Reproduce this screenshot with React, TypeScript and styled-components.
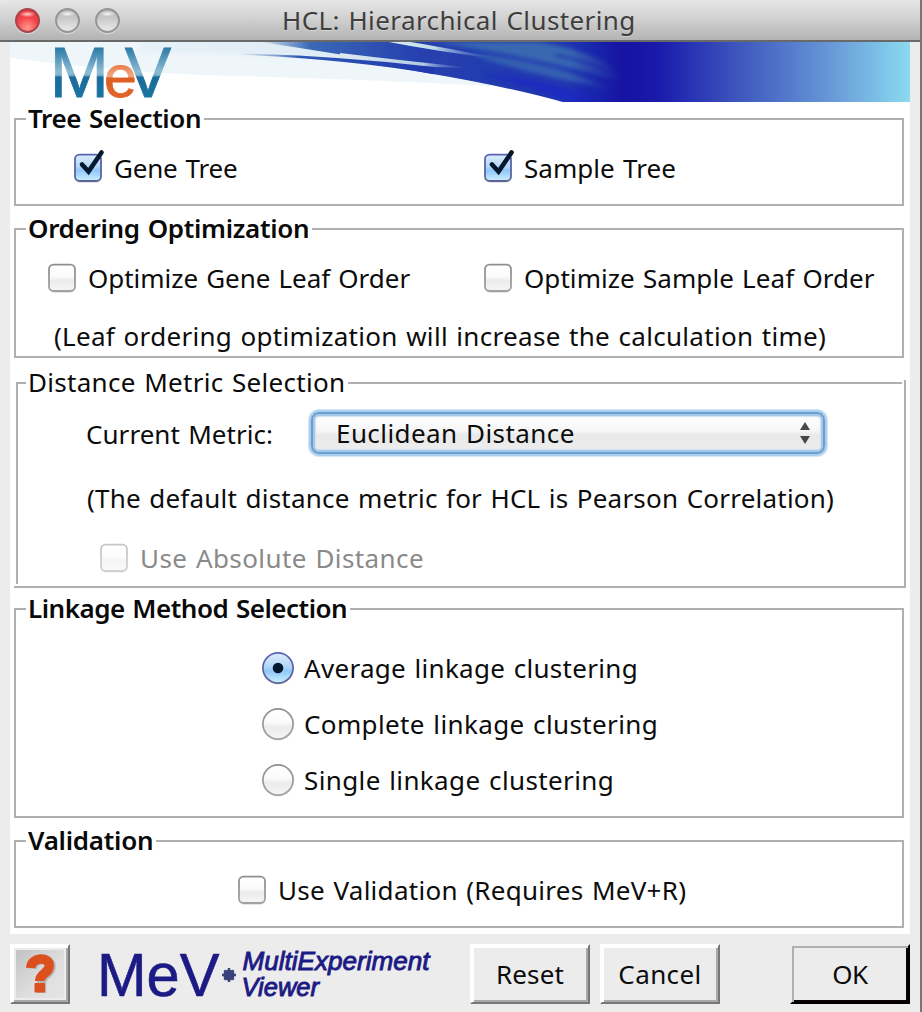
import React, { ReactNode } from 'react';
import styled, { createGlobalStyle, css } from 'styled-components';

const GlobalStyle = createGlobalStyle`
  html, body { margin: 0; padding: 0; background: #ececec; }
  * { box-sizing: border-box; }
`;

const uiFont = css`
  font-family: 'Noto Sans', 'Open Sans', sans-serif;
  font-size: 26px;
  line-height: 36px;
  word-spacing: 1.4px;
  white-space: nowrap;
`;

const Window = styled.div`
  display: flex;
  flex-direction: column;
  width: 922px;
  height: 1012px;
  background: #ececec;
  border-right: 2px solid #777;
  overflow: hidden;
`;

const TitleBar = styled.header`
  display: flex;
  align-items: center;
  height: 42px;
  flex: none;
  padding: 0 0 0 15px;
  margin-right: -2px;
  background: linear-gradient(#e7e7e7, #cfcfcf 50%, #b3b3b3);
  border-bottom: 2px solid #696969;
  border-radius: 4px 4px 0 0;
`;

const Lights = styled.div`
  display: flex;
  gap: 15px;
`;

const Light = styled.span<{ $red?: boolean }>`
  width: 25px;
  height: 25px;
  border-radius: 50%;
  border: 2px solid ${(p) => (p.$red ? '#a8444a' : '#959595')};
  background: ${(p) =>
    p.$red
      ? 'radial-gradient(ellipse 8px 3px at 50% 20%, #ffd3d3, rgba(255,200,200,0) 100%), radial-gradient(circle at 50% 85%, #ff9a90 0, #f5454a 50%, #dc3239 100%)'
      : 'radial-gradient(ellipse 8px 3px at 50% 18%, #f6f6f6, rgba(240,240,240,0) 100%), linear-gradient(#b5b5b5, #cecece 50%, #e9e9e9)'};
  box-shadow: 0 1px 1px rgba(255, 255, 255, 0.5);
`;

const Title = styled.h1`
  ${uiFont}
  margin: 0 0 0 162px;
  font-weight: 400;
  color: #3e3e3e;
  letter-spacing: 0.4px;
  text-shadow: 0 1px 0 rgba(255, 255, 255, 0.35);
`;

const Panel = styled.main`
  display: flex;
  flex-direction: column;
  width: 900px;
  height: 892px;
  flex: none;
  margin-left: 10px;
  background: #fff;
`;

const Banner = styled.svg`
  display: block;
  width: 900px;
  height: 60px;
  flex: none;
`;

const Group = styled.section<{ $top: number; $h: number }>`
  display: flex;
  flex-direction: column;
  width: 890px;
  height: ${(p) => p.$h}px;
  flex: none;
  margin: ${(p) => p.$top}px 0 0 4px;
  border: 2px solid #b0b0b0;
`;

/* The distance group is drawn with slightly offset edges. */
const OpenGroup = styled.section`
  display: grid;
  grid-template: 2px 2px 200px 2px 2px / 2px 2px 884px 2px 2px;
  width: 892px;
  height: 208px;
  flex: none;
  margin: 22px 0 0 4px;
`;

const Edge = styled.i<{ $area: string }>`
  grid-area: ${(p) => p.$area};
  background: #b0b0b0;
`;

const OpenBody = styled.div`
  grid-area: 3 / 3 / 4 / 4;
  display: flex;
  flex-direction: column;
  margin-left: -2px;
`;

const Legend = styled.h2<{ $ls: number; $plain?: boolean }>`
  ${uiFont}
  align-self: flex-start;
  height: 36px;
  margin: -20px 0 -16px 10px;
  padding: 0 3px 0 2px;
  background: #fff;
  color: #0a0a0a;
  font-weight: ${(p) => (p.$plain ? 400 : 600)};
  letter-spacing: ${(p) => p.$ls}px;
`;

const Line = styled.div<{ $top: number; $left: number }>`
  display: flex;
  align-items: center;
  height: 36px;
  flex: none;
  margin-top: ${(p) => p.$top}px;
  padding-left: ${(p) => p.$left}px;
`;

const Cell = styled.div<{ $w: number; $drop?: number }>`
  width: ${(p) => p.$w}px;
  flex: none;
  padding-top: ${(p) => p.$drop ?? 0}px;
`;

const Text = styled.span<{ $ls: number }>`
  ${uiFont}
  color: #0c0c0c;
  letter-spacing: ${(p) => p.$ls}px;
`;

const Option = styled.label<{ $gap: number; $dim?: boolean }>`
  display: flex;
  align-items: center;
  gap: ${(p) => p.$gap}px;
  ${(p) => p.$dim && css`${Text} { color: #8a8a8a; }`}
`;

const BoxSvg = styled.svg`
  display: block;
  width: 28px;
  height: 30px;
  flex: none;
  overflow: visible;
`;

const RadioSvg = styled.svg`
  display: block;
  width: 32px;
  height: 32px;
  flex: none;
  overflow: visible;
`;

const Select = styled.div`
  display: flex;
  align-items: center;
  justify-content: space-between;
  width: 514px;
  height: 42px;
  margin-bottom: 1px;
  padding: 0 13px 0 23px;
  border: 2px solid #6c9dcf;
  border-radius: 8px;
  background: linear-gradient(#fff, #f6f6f6 45%, #e9e9e9 55%, #ededed);
  box-shadow: 0 0 0 2px #a9cdec, 0 0 1px 3px #d3e6f6, inset 0 0 0 2px #a5c8e8, inset 0 0 1px 3px #cfe2f4;
`;

const Footer = styled.footer`
  display: flex;
  align-items: flex-start;
  height: 78px;
  padding: 10px 0 0 10px;
`;

const HelpButton = styled.button`
  width: 60px;
  height: 60px;
  padding: 0;
  border: 2px solid;
  border-color: #fff #777 #777 #fff;
  box-shadow: inset 2px 2px 0 #fff, inset -2px -2px 0 #a9a9a9, inset 4px 4px 0 #ececec, inset -4px -4px 0 #ececec;
  background: linear-gradient(135deg, #bdbdbd, #dedede 55%, #e6e6e6);
`;

const HelpIcon = styled.svg`
  display: block;
  width: 56px;
  height: 56px;
`;

const Push = styled.button<{ $ls: number; $default?: boolean; $ml: number }>`
  ${uiFont}
  width: 120px;
  height: 60px;
  padding: 0;
  margin-left: ${(p) => p.$ml}px;
  color: #0c0c0c;
  letter-spacing: ${(p) => p.$ls}px;
  background: #ececec;
  border: 2px solid;
  ${(p) =>
    p.$default
      ? css`
          border-color: #ececec #000 #000 #ececec;
          box-shadow: inset 2px 2px 0 #b0b0b0, inset -2px -2px 0 #0b0204;
        `
      : css`
          border-color: #fff #777 #777 #fff;
          box-shadow: inset 2px 2px 0 #fff, inset -2px -2px 0 #a9a9a9;
        `}
`;

const Brand = styled.svg`
  display: block;
  width: 340px;
  height: 60px;
  margin-left: 24px;
  margin-right: 36px;
`;

function Defs() {
  return (
    <defs>
      <linearGradient id="boxOff" x1="0" y1="0" x2="0" y2="1">
        <stop offset="0" stopColor="#fff" />
        <stop offset=".45" stopColor="#fbfbfb" />
        <stop offset=".6" stopColor="#ebebeb" />
        <stop offset="1" stopColor="#f6f6f6" />
      </linearGradient>
      <linearGradient id="boxOn" x1="0" y1="0" x2="0" y2="1">
        <stop offset="0" stopColor="#dcecfb" />
        <stop offset=".45" stopColor="#b4d7f8" />
        <stop offset=".6" stopColor="#8fc8f8" />
        <stop offset="1" stopColor="#cdf0ff" />
      </linearGradient>
      <linearGradient id="rimOn" x1="0" y1="0" x2="0" y2="1">
        <stop offset="0" stopColor="#5a62b4" />
        <stop offset="1" stopColor="#5d6496" />
      </linearGradient>
      <linearGradient id="rimOff" x1="0" y1="0" x2="0" y2="1">
        <stop offset="0" stopColor="#8f8f8f" />
        <stop offset="1" stopColor="#a2a2a2" />
      </linearGradient>
    </defs>
  );
}

function Check({ on, dim }: { on?: boolean; dim?: boolean }) {
  return (
    <BoxSvg viewBox="0 0 28 30" opacity={dim ? 0.5 : 1}>
      <Defs />
      <rect x="1" y="3" width="26" height="27" rx="5" fill="#000" opacity=".1" />
      <rect x="1" y="1.6" width="26" height="26.4" rx="4.5" fill={`url(#box${on ? 'On' : 'Off'})`} stroke={`url(#rim${on ? 'On' : 'Off'})`} strokeWidth="1.8" />
      {on && <path d="M8 11.5L14.5 18.5L27.5 -.5" fill="none" stroke="#04182e" strokeWidth="4.6" strokeLinecap="round" />}
    </BoxSvg>
  );
}

function Radio({ on }: { on?: boolean }) {
  return (
    <RadioSvg viewBox="0 0 32 32">
      <Defs />
      <circle cx="16" cy="17.2" r="15.3" fill="#000" opacity=".12" />
      <circle cx="16" cy="16" r="15.1" fill={`url(#box${on ? 'On' : 'Off'})`} stroke={`url(#rim${on ? 'On' : 'Off'})`} strokeWidth="1.7" />
      {on && <circle cx="16" cy="16" r="5.3" fill="#04182e" />}
    </RadioSvg>
  );
}

function CheckOption({ on, dim, ls, children }: { on?: boolean; dim?: boolean; ls: number; children: ReactNode }) {
  return (
    <Option $gap={12} $dim={dim}>
      <Check on={on} dim={dim} />
      <Text $ls={ls}>{children}</Text>
    </Option>
  );
}

function MevBanner() {
  return (
    <Banner viewBox="0 0 900 60">
      <defs>
        <linearGradient id="haze" gradientUnits="userSpaceOnUse" x1="130" y1="0" x2="420" y2="0">
          <stop offset="0" stopColor="#e6f1f8" />
          <stop offset="1" stopColor="#dbe8f1" />
        </linearGradient>
        <linearGradient id="sky" gradientUnits="userSpaceOnUse" x1="560" y1="0" x2="900" y2="0">
          <stop offset="0" stopColor="#1716a5" stopOpacity="0" />
          <stop offset=".16" stopColor="#1613a2" />
          <stop offset=".26" stopColor="#1a1aac" />
          <stop offset=".5" stopColor="#3e58be" />
          <stop offset=".75" stopColor="#6594d6" />
          <stop offset="1" stopColor="#8adaf0" />
        </linearGradient>
        <linearGradient id="upper" gradientUnits="userSpaceOnUse" x1="245" y1="0" x2="640" y2="0">
          <stop offset="0" stopColor="#4a7cc0" stopOpacity="0" />
          <stop offset=".14" stopColor="#3a69b6" />
          <stop offset=".4" stopColor="#2742ae" />
          <stop offset="1" stopColor="#1c2cb2" />
        </linearGradient>
        <linearGradient id="thin" gradientUnits="userSpaceOnUse" x1="232" y1="0" x2="420" y2="0">
          <stop offset="0" stopColor="#5f8cc8" stopOpacity=".1" />
          <stop offset=".3" stopColor="#2f59b2" />
          <stop offset="1" stopColor="#2238b0" />
        </linearGradient>
        <linearGradient id="ray" gradientUnits="userSpaceOnUse" x1="370" y1="0" x2="490" y2="0">
          <stop offset="0" stopColor="#e4f2f6" />
          <stop offset=".45" stopColor="#c0dbe8" />
          <stop offset="1" stopColor="#3f6db8" stopOpacity="0" />
        </linearGradient>
        <linearGradient id="gap" gradientUnits="userSpaceOnUse" x1="340" y1="0" x2="462" y2="0">
          <stop offset="0" stopColor="#dbe8f1" />
          <stop offset=".6" stopColor="#b3cbe3" />
          <stop offset="1" stopColor="#2b4ab0" stopOpacity="0" />
        </linearGradient>
        <linearGradient id="letterM" gradientUnits="userSpaceOnUse" x1="0" y1="4" x2="0" y2="56">
          <stop offset="0" stopColor="#2575a3" />
          <stop offset=".5" stopColor="#8dbcd4" />
          <stop offset=".56" stopColor="#7fb2cd" />
          <stop offset=".6" stopColor="#1a6b9b" />
          <stop offset="1" stopColor="#1b74a3" />
        </linearGradient>
        <linearGradient id="letterE" gradientUnits="userSpaceOnUse" x1="0" y1="22" x2="0" y2="56">
          <stop offset="0" stopColor="#e87a45" />
          <stop offset=".36" stopColor="#f1a983" />
          <stop offset=".42" stopColor="#dd5f22" />
          <stop offset="1" stopColor="#e0642a" />
        </linearGradient>
        <filter id="soft" x="-5%" y="-50%" width="110%" height="200%">
          <feGaussianBlur stdDeviation="2" />
        </filter>
        <filter id="fine" x="-5%" y="-50%" width="110%" height="200%">
          <feGaussianBlur stdDeviation=".6" />
        </filter>
      </defs>
      <rect width="900" height="60" fill="#fff" />
      <path d="M-5 -5H500V45Q380 38 190 33Q80 27 -5 15Z" fill="#eff6fa" filter="url(#fine)" />
      <path d="M130 -8H420V26Q300 12 130 11Z" fill="url(#haze)" filter="url(#soft)" />
      <g filter="url(#fine)">
        <path d="M245 -3H660V62H560Q500 45 420 31.500L340 17V14Q290 6 245 -1Z" fill="url(#upper)" />
        <path d="M330 11Q400 19.500 465 26Q420 26 330 18Z" fill="url(#gap)" />
        <path d="M232 11.500Q330 14 424 25V32.200Q340 17.500 232 12.800Z" fill="url(#thin)" />
        <path d="M368 -2H388Q440 6 495 18Q430 10 368 -2Z" fill="url(#ray)" />
      </g>
      <g filter="url(#soft)">
        <path d="M425 0H530Q600 12 620 42Q540 18 425 0Z" fill="#3767b0" />
        <path d="M460 12Q540 18 600 46Q520 34 460 12Z" fill="#386bb2" opacity=".8" />
        <path d="M470 31Q540 38 600 60H560Q520 45 470 31Z" fill="#1f2cc0" />
        <path d="M545 13Q590 22 625 42" fill="none" stroke="#2238ae" strokeWidth="3" />
        <path d="M590 -2Q625 6 645 34L690 -4Z" fill="#1715a0" />
      </g>
      <rect x="560" width="340" height="60" fill="url(#sky)" />
      <g fontFamily="'Liberation Sans', Arial, sans-serif" fontSize="71" strokeWidth=".8">
        <text x="39.500" y="54.700" textLength="59.500" lengthAdjust="spacingAndGlyphs" fill="url(#letterM)" stroke="url(#letterM)">M</text>
        <text x="114.700" y="54.700" textLength="46.500" lengthAdjust="spacingAndGlyphs" fill="url(#letterM)" stroke="url(#letterM)">V</text>
        <text x="94" y="54.700" fontSize="59" fill="url(#letterE)" stroke="url(#letterE)">e</text>
      </g>
    </Banner>
  );
}

export default function App() {
  return (
    <>
      <GlobalStyle />
      <Window>
        <TitleBar>
          <Lights>
            <Light $red />
            <Light />
            <Light />
          </Lights>
          <Title>HCL: Hierarchical Clustering</Title>
        </TitleBar>
        <Panel>
          <MevBanner />

          <Group $top={16} $h={88}>
            <Legend $ls={-0.38}>Tree Selection</Legend>
            <Line $top={30} $left={58}>
              <Cell $w={410}><CheckOption on ls={-0.19}>Gene Tree</CheckOption></Cell>
              <CheckOption on ls={0.04}>Sample Tree</CheckOption>
            </Line>
          </Group>

          <Group $top={22} $h={130}>
            <Legend $ls={-0.305}>Ordering Optimization</Legend>
            <Line $top={30} $left={32}>
              <Cell $w={436}><CheckOption ls={-0.03}>Optimize Gene Leaf Order</CheckOption></Cell>
              <CheckOption ls={0.06}>Optimize Sample Leaf Order</CheckOption>
            </Line>
            <Line $top={22} $left={38}>
              <Text $ls={0.3}>(Leaf ordering optimization will increase the calculation time)</Text>
            </Line>
          </Group>

          <OpenGroup>
            <Edge $area="2 / 2 / 3 / 4" />
            <Edge $area="2 / 2 / 4 / 3" />
            <Edge $area="1 / 5 / 6 / 6" />
            <Edge $area="5 / 1 / 6 / 6" />
            <OpenBody>
              <Legend $plain $ls={0.3}>Distance Metric Selection</Legend>
              <Line $top={31} $left={70}>
                <Cell $w={225} $drop={2}><Text $ls={0.05}>Current Metric:</Text></Cell>
                <Select>
                  <Text $ls={0.42}>Euclidean Distance</Text>
                  <svg width="10" height="24" viewBox="0 0 10 24">
                    <path d="M5 1L10 9H0ZM5 23L10 15H0Z" fill="#484848" />
                  </svg>
                </Select>
              </Line>
              <Line $top={29} $left={71}>
                <Text $ls={0.22}>(The default distance metric for HCL is Pearson Correlation)</Text>
              </Line>
              <Line $top={24} $left={84}>
                <CheckOption dim ls={0.41}>Use Absolute Distance</CheckOption>
              </Line>
            </OpenBody>
          </OpenGroup>

          <Group $top={20} $h={210}>
            <Legend $ls={-0.49}>Linkage Method Selection</Legend>
            <Line $top={40} $left={246}>
              <Option $gap={10}><Radio on /><Text $ls={0.3}>Average linkage clustering</Text></Option>
            </Line>
            <Line $top={20} $left={246}>
              <Option $gap={10}><Radio /><Text $ls={0.37}>Complete linkage clustering</Text></Option>
            </Line>
            <Line $top={20} $left={246}>
              <Option $gap={10}><Radio /><Text $ls={0.38}>Single linkage clustering</Text></Option>
            </Line>
          </Group>

          <Group $top={22} $h={88}>
            <Legend $ls={-0.25}>Validation</Legend>
            <Line $top={30} $left={222}>
              <CheckOption ls={0.28}>Use Validation (Requires MeV+R)</CheckOption>
            </Line>
          </Group>
        </Panel>

        <Footer>
          <HelpButton aria-label="Help">
            <HelpIcon viewBox="0 0 56 56">
              <path d="M20 22.500C21 11.500 39.500 11 39 21C38.500 29 29.500 28.500 29.500 36V47" fill="none" stroke="#8e8e8e" strokeWidth="9.500" opacity=".5" />
              <path d="M18.700 22C19.500 10.500 37.500 10 37.200 20C37 27.500 27.700 27 27.700 35" fill="none" stroke="#dc4f1f" strokeWidth="9.500" />
              <rect x="22.500" y="37" width="10.500" height="9.500" rx="1" fill="#dc4f1f" />
            </HelpIcon>
          </HelpButton>
          <Brand viewBox="0 0 340 60" fill="#1c1a84" fontFamily="'Liberation Sans', Arial, sans-serif">
            <text x="3" y="51.800" fontSize="61.500" textLength="122.500" lengthAdjust="spacingAndGlyphs" stroke="#1c1a84" strokeWidth=".6">MeV</text>
            <circle cx="135" cy="31" r="5.600" fill="#39427a" />
            <path d="M135 24V38M128 31H142M130.300 26.300L139.700 35.700M139.700 26.300L130.300 35.700" stroke="#39427a" strokeWidth="2.400" />
            <g fontSize="25" fontStyle="italic" stroke="#1c1a84" strokeWidth=".9">
              <text x="148.500" y="26" textLength="187" lengthAdjust="spacingAndGlyphs">MultiExperiment</text>
              <text x="147.500" y="52" textLength="77.500" lengthAdjust="spacingAndGlyphs">Viewer</text>
            </g>
          </Brand>
          <Push $ml={0} $ls={0.14}>Reset</Push>
          <Push $ml={10} $ls={0.4}>Cancel</Push>
          <Push $ml={70} $ls={-0.5} $default>OK</Push>
        </Footer>
      </Window>
    </>
  );
}
